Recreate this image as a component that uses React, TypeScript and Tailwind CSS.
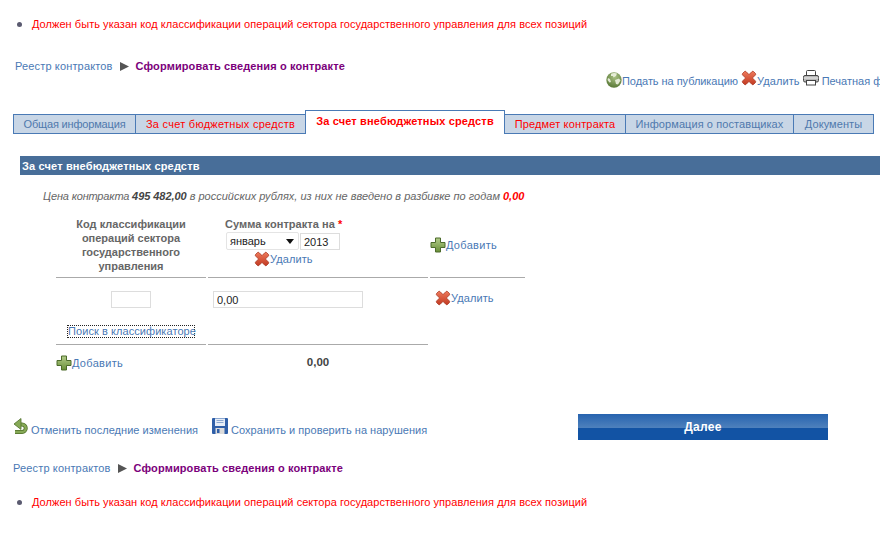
import React from "react";

const XIcon = () => (
  <svg width="16" height="16" viewBox="0 0 16 16" className="shrink-0">
    <defs>
      <linearGradient id="xg" x1="0" y1="0" x2="0" y2="1">
        <stop offset="0" stopColor="#ee7a5c" />
        <stop offset="1" stopColor="#c23a22" />
      </linearGradient>
    </defs>
    <path d="M1.500 3.500 3.500 1.500Q4.200 1 5 1.600L8 4.600 11 1.600Q11.800 1 12.500 1.500L14.500 3.500Q15 4.200 14.400 5L11.400 8 14.400 11Q15 11.800 14.500 12.500L12.500 14.500Q11.800 15 11 14.400L8 11.400 5 14.400Q4.200 15 3.500 14.500L1.500 12.500Q1 11.800 1.600 11L4.600 8 1.600 5Q1 4.200 1.500 3.500Z" fill="url(#xg)" stroke="#a83a26" strokeWidth="0.8" />
  </svg>
);

const PlusIcon = () => (
  <svg width="16" height="16" viewBox="0 0 16 16" className="shrink-0">
    <defs>
      <linearGradient id="pg" x1="0" y1="0" x2="0" y2="1">
        <stop offset="0" stopColor="#b3cc8a" />
        <stop offset="1" stopColor="#6a9038" />
      </linearGradient>
    </defs>
    <path d="M5.500 1h5v4.500H15v5h-4.500V15h-5v-4.500H1v-5h4.500Z" fill="url(#pg)" stroke="#4c6b2b" strokeWidth="1" strokeLinejoin="round" />
  </svg>
);

const GlobeIcon = () => (
  <svg width="16" height="16" viewBox="0 0 16 16" className="shrink-0">
    <defs>
      <radialGradient id="gg" cx="0.55" cy="0.3" r="0.8">
        <stop offset="0" stopColor="#a9c183" />
        <stop offset="1" stopColor="#4f6f2d" />
      </radialGradient>
    </defs>
    <circle cx="8" cy="8" r="7.700" fill="url(#gg)" />
    <path d="M5 1.800Q8 0.500 11 1.500L10 4 7.500 5.500 7 4 5 4ZM9 8l4-1.500 1.500 2-2.500 4-2-.5ZM2 6l2 1 1 3-1.500.5L1.500 8Z" fill="#eef3e2" opacity="0.9" />
  </svg>
);

const PrinterIcon = () => (
  <svg width="16" height="16" viewBox="0 0 16 16" className="shrink-0">
    <rect x="3.500" y="0.500" width="9" height="5.500" rx="1" fill="#fff" stroke="#444" />
    <rect x="0.500" y="5.500" width="15" height="6.500" rx="1.500" fill="#b8b8b8" stroke="#444" />
    <rect x="0.500" y="7.500" width="15" height="1" fill="#eee" />
    <rect x="3.500" y="10.500" width="9" height="4.500" fill="#fff" stroke="#444" />
  </svg>
);

const UndoIcon = () => (
  <svg width="16" height="16" viewBox="0 0 16 16" className="shrink-0">
    <path d="M6 6.500H9a3.700 3.700 0 0 1 0 7.500H2" fill="none" stroke="#4f7028" strokeWidth="4" />
    <path d="M6 6.500H9a3.700 3.700 0 0 1 0 7.500H2" fill="none" stroke="#86a957" strokeWidth="2.400" />
    <path d="M8 0.500V11.500L1 6Z" fill="#86a957" stroke="#4f7028" strokeWidth="0.800" strokeLinejoin="round" />
  </svg>
);

const SaveIcon = () => (
  <svg width="16" height="16" viewBox="0 0 16 16" className="shrink-0">
    <rect width="16" height="16" rx="1" fill="#2f5fa8" />
    <rect x="3" y="0.500" width="10" height="7.500" fill="#e6edf7" />
    <path d="M4.500 2.500h7M4.500 4.500h7" stroke="#8aa7d0" />
    <rect x="3.500" y="10" width="9" height="6" fill="#dcdcdc" />
    <rect x="5" y="11" width="2.500" height="4" fill="#2f5fa8" />
  </svg>
);

const Arrow = () => (
  <svg width="9" height="9" viewBox="0 0 9 9" className="shrink-0">
    <path d="M0 0 9 4.500 0 9Z" fill="#555" />
  </svg>
);

const linkCls = "text-[#4a79b5]";

const ErrorLine = () => (
  <div className="flex items-center h-[14px]">
    <span className="ml-[17px] w-[5px] h-[5px] rounded-full bg-[#5a5a70]" />
    <span className="ml-[10px] text-[#ff0000] tracking-[0.05px]">
      Должен быть указан код классификации операций сектора государственного управления для всех позиций
    </span>
  </div>
);

const Crumbs = ({ className }: { className: string }) => (
  <div className={`flex items-center h-[14px] ${className}`}>
    <span className="text-[#4a79b5] tracking-[0.15px]">Реестр контрактов</span>
    <span className="ml-[7px]"><Arrow /></span>
    <span className="ml-[7px] font-bold text-[#7b007b] tracking-[0.12px]">Сформировать сведения о контракте</span>
  </div>
);

const Tab = ({ label, color, w }: { label: string; color: string; w: string }) => (
  <div className={`h-[20px] ${w} -ml-[1px] first:ml-0 border border-[#4a7ab5] bg-[#c8d6e6] flex items-center justify-center whitespace-nowrap ${color}`}>
    {label}
  </div>
);

const Rule = () => <div className="h-[1px] bg-[#aaa]" />;

export default function App() {
  return (
    <div className="w-[880px] h-[535px] overflow-hidden bg-white text-[11px] leading-[14px] text-[#555] font-['Liberation_Sans',Arial,sans-serif]">
      <div className="pt-[17px]"><ErrorLine /></div>

      <Crumbs className="ml-[15px] mt-[28px]" />

      <div className="flex items-end h-[18px] ml-[606px] whitespace-nowrap w-[400px] -mt-[3px]">
        <GlobeIcon />
        <span className={`${linkCls} tracking-[-0.05px]`}>Подать на публикацию</span>
        <span className="ml-[3px] mb-[2px]"><XIcon /></span>
        <span className={`${linkCls} tracking-[0.1px]`}>Удалить</span>
        <span className="ml-[3px] mb-[2px]"><PrinterIcon /></span>
        <span className={`ml-[3px] ${linkCls}`}>Печатная форма</span>
      </div>

      <div className="flex items-end ml-[13px] mt-[22px] h-[24px]">
        <Tab w="w-[123px]" color="text-[#4f79ad] tracking-[-0.17px]" label="Общая информация" />
        <Tab w="w-[171px]" color="text-[#ff0000] tracking-[0.27px]" label="За счет бюджетных средств" />
        <div className="h-[24px] w-[200px] -ml-[1px] border border-b-0 border-[#4a7ab5] bg-white text-[#ff0000] font-bold tracking-[0.15px] flex items-start justify-center pt-[3px] whitespace-nowrap">
          За счет внебюджетных средств
        </div>
        <Tab w="w-[122px]" color="text-[#ff0000] tracking-[0.15px]" label="Предмет контракта" />
        <Tab w="w-[169px]" color="text-[#4f79ad] tracking-[0.08px]" label="Информация о поставщиках" />
        <Tab w="w-[81px]" color="text-[#4f79ad] tracking-[0.08px]" label="Документы" />
      </div>

      <div className="ml-[20px] mt-[22px] h-[19px] bg-[#486e99] text-white font-bold tracking-[0.15px] flex items-center pl-[2px]">
        За счет внебюджетных средств
      </div>

      <div className="ml-[43px] mt-[14px] italic text-[#666]">
        <span className="tracking-[-0.18px]">Цена контракта </span><b className="text-[#444] tracking-[-0.05px]">495 482,00</b> в российских рублях, из них не введено в разбивке по годам <b className="text-[#ff0000]">0,00</b>
      </div>

      <div className="ml-[56px] mt-[8px] grid grid-cols-[150px_220px_95px] gap-x-[2px]">
        <div className="h-[66px] text-center font-bold text-[#666] pt-[6px]">
          Код классификации<br />операций сектора<br />государственного<br />управления
        </div>
        <div className="h-[66px] pl-[17px] pt-[6px]">
          <div className="font-bold text-[#666] whitespace-nowrap tracking-[0.05px]">
            Сумма контракта на <span className="text-[#ff0000]">*</span>
          </div>
          <div className="flex gap-[1px] mt-[1px]">
            <div className="relative w-[73px] ml-[1px] h-[18px] border border-[#e4e4e4] rounded-[2px] text-[#222] flex items-center pl-[3px]">
              январь
              <svg width="8" height="5" viewBox="0 0 8 5" className="absolute right-[4px] top-[6px]"><path d="M0 0h8L4 5Z" fill="#111" /></svg>
            </div>
            <input readOnly value="2013" className="w-[40px] h-[17px] mt-[1px] border border-[#ddd] pl-[3px] text-[#222] outline-none" />
          </div>
          <div className="flex items-center mt-[1px] ml-[29px] h-[16px]">
            <XIcon /><span className={`${linkCls} tracking-[0.1px]`}>Удалить</span>
          </div>
        </div>
        <div className="h-[66px] pt-[26px]">
          <div className="flex items-center h-[16px]"><PlusIcon /><span className={`${linkCls} tracking-[0.3px]`}>Добавить</span></div>
        </div>

        <Rule />
        <Rule />
        <Rule />

        <div className="h-[66px] flex flex-col items-center pt-[13px]">
          <input readOnly className="w-[40px] h-[17px] border border-[#ddd] outline-none" />
          <div className={`mt-[17px] border border-dotted border-[#222] h-[13px] leading-[11px] w-[128px] text-center whitespace-nowrap tracking-[0.07px] ${linkCls}`}>
            Поиск в классификаторе
          </div>
        </div>
        <div className="h-[66px] pl-[5px] pt-[13px]">
          <input readOnly value="0,00" className="w-[150px] h-[17px] border border-[#ddd] pl-[3px] text-[#222] outline-none" />
        </div>
        <div className="h-[66px] pt-[12px] pl-[5px]">
          <div className="flex items-center h-[16px]"><XIcon /><span className={`${linkCls} tracking-[0.1px]`}>Удалить</span></div>
        </div>

        <Rule />
        <Rule />
        <div />

        <div className="h-[36px] flex items-center">
          <PlusIcon /><span className={`${linkCls} tracking-[0.3px]`}>Добавить</span>
        </div>
        <div className="h-[36px] flex items-center justify-center font-bold text-[#444] text-[11.5px] pb-[2px]">0,00</div>
        <div />
      </div>

      <div className="flex items-start ml-[13px] mt-[33px] h-[26px]">
        <div className="mt-[4px] flex items-start">
          <UndoIcon /><span className={`ml-[2px] mt-[5px] tracking-[0.03px] ${linkCls}`}>Отменить последние изменения</span>
        </div>
        <div className="ml-[14px] mt-[4px] flex items-start">
          <SaveIcon /><span className={`ml-[3px] mt-[5px] tracking-[0.03px] ${linkCls}`}>Сохранить и проверить на нарушения</span>
        </div>
        <button className="ml-auto mr-[52px] w-[250px] h-[26px] text-white font-bold text-[12px] tracking-[0.3px] bg-[linear-gradient(to_bottom,#2663af_0%,#4d80bc_52%,#1253a4_52%,#1253a4_100%)]">
          Далее
        </button>
      </div>

      <Crumbs className="ml-[13px] mt-[21px]" />

      <div className="mt-[20px]"><ErrorLine /></div>
    </div>
  );
}
